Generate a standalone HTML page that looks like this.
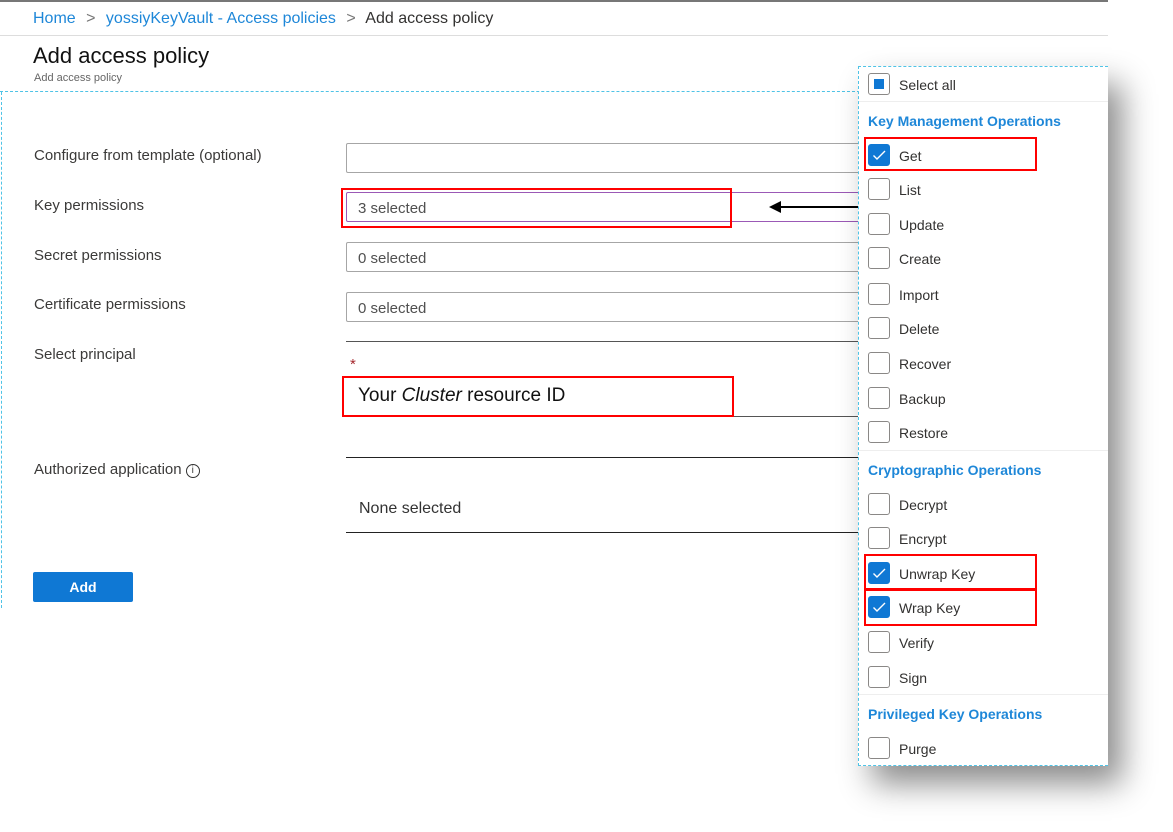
<!DOCTYPE html>
<html><head><meta charset="utf-8"><style>
*{margin:0;padding:0;box-sizing:border-box}
body{width:1173px;height:832px;position:relative;background:#fff;font-family:"Segoe UI","Liberation Sans",sans-serif;overflow:hidden;color:#323130}
.a{position:absolute;white-space:nowrap}
.lbl{font-size:15px;color:#3b3a39}
.inp{position:absolute;left:346px;width:520px;height:30px;border:1px solid #a6a6a6;border-radius:2px;font-size:15px;color:#505050;padding:7px 11px 3px}
.cb{position:absolute;left:868px;width:22px;height:22px;border:1px solid #8a8886;border-radius:3px;background:#fff}
.cb.on{background:#0f78d4;border-color:#0f78d4}
.it{position:absolute;left:899px;font-size:14px;color:#323130}
.hd{position:absolute;left:868px;font-size:14px;color:#1e87d8;font-weight:bold}
.red{position:absolute;border:2px solid #f00}
.sep{position:absolute;left:859px;width:249px;height:1px;background:#eee}
</style></head><body>
<div class="a" style="left:0;top:0;width:1108px;height:2px;background:#777"></div>
<div class="a" style="left:33px;top:10px;font-size:16px;color:#1e87d8">Home <span style="color:#777;margin:0 6px">&gt;</span> yossiyKeyVault - Access policies <span style="color:#777;margin:0 6px">&gt;</span> <span style="color:#323130">Add access policy</span></div>
<div class="a" style="left:0;top:35px;width:1108px;height:1px;background:#ddd"></div>
<div class="a" style="left:33px;top:43px;font-size:22px;color:#111">Add access policy</div>
<div class="a" style="left:34px;top:72px;font-size:11px;color:#666">Add access policy</div>
<div class="a" style="left:0;top:91px;width:860px;border-top:1px dashed #4fc3e6"></div>
<div class="a" style="left:1px;top:92px;width:1px;height:516px;border-left:1px dashed #4fc3e6"></div>

<div class="a lbl" style="left:34px;top:147px">Configure from template (optional)</div>
<div class="a lbl" style="left:34px;top:197px">Key permissions</div>
<div class="a lbl" style="left:34px;top:247px">Secret permissions</div>
<div class="a lbl" style="left:34px;top:296px">Certificate permissions</div>
<div class="a lbl" style="left:34px;top:346px">Select principal</div>
<div class="a lbl" style="left:34px;top:461px">Authorized application <span style="display:inline-block;width:14px;height:14px;border:1.2px solid #333;border-radius:50%;font-size:10px;line-height:11px;text-align:center;vertical-align:1px">i</span></div>

<div class="inp" style="top:143px"></div>
<div class="inp" style="top:192px;border-color:#9b59b6">3 selected</div>
<div class="inp" style="top:242px">0 selected</div>
<div class="inp" style="top:292px">0 selected</div>
<div class="a" style="left:346px;top:341px;width:514px;height:1px;background:#555"></div>
<div class="a" style="left:350px;top:356px;color:#a4262c;font-size:15px">*</div>
<div class="a" style="left:358px;top:385px;font-size:19px;color:#111">Your <i>Cluster</i> resource ID</div>
<div class="a" style="left:346px;top:416px;width:514px;height:1px;background:#555"></div>
<div class="a" style="left:346px;top:457px;width:514px;height:1px;background:#222"></div>
<div class="a" style="left:359px;top:500px;font-size:16px;color:#333">None selected</div>
<div class="a" style="left:346px;top:532px;width:514px;height:1px;background:#222"></div>
<div class="a" style="left:33px;top:572px;width:100px;height:30px;background:#0f78d4;border-radius:2px;color:#fff;font-weight:bold;font-size:14px;text-align:center;line-height:30px">Add</div>

<div class="red" style="left:341px;top:188px;width:391px;height:40px"></div>
<div class="red" style="left:342px;top:376px;width:392px;height:41px"></div>
<div class="a" style="left:780px;top:206px;width:80px;height:2px;background:#000"></div>
<div class="a" style="left:769px;top:201px;width:0;height:0;border-top:6px solid transparent;border-bottom:6px solid transparent;border-right:12px solid #000"></div>

<div class="a" style="left:858px;top:66px;width:250px;height:700px;background:#fff;border:1px dashed #4fc3e6;border-right:none;box-shadow:14px 18px 30px rgba(0,0,0,.45)"></div>
<div class="cb" style="top:73px"><div style="position:absolute;left:5px;top:5px;width:10px;height:10px;background:#0f78d4"></div></div>
<div class="it" style="top:77px">Select all</div>
<div class="sep" style="top:101px"></div>
<div class="hd" style="top:113px">Key Management Operations</div>
<div class="sep" style="top:450px"></div>
<div class="hd" style="top:462px">Cryptographic Operations</div>
<div class="sep" style="top:694px"></div>
<div class="hd" style="top:706px">Privileged Key Operations</div>

<div class="cb on" style="top:144px"><svg width="20" height="20" viewBox="0 0 20 20"><path d="M4.5 10.5l3.5 3.5 8-8" stroke="#fff" stroke-width="1.4" fill="none"/></svg></div><div class="it" style="top:148px">Get</div>
<div class="cb" style="top:178px"></div><div class="it" style="top:182px">List</div>
<div class="cb" style="top:213px"></div><div class="it" style="top:217px">Update</div>
<div class="cb" style="top:247px"></div><div class="it" style="top:251px">Create</div>
<div class="cb" style="top:283px"></div><div class="it" style="top:287px">Import</div>
<div class="cb" style="top:317px"></div><div class="it" style="top:321px">Delete</div>
<div class="cb" style="top:352px"></div><div class="it" style="top:356px">Recover</div>
<div class="cb" style="top:387px"></div><div class="it" style="top:391px">Backup</div>
<div class="cb" style="top:421px"></div><div class="it" style="top:425px">Restore</div>
<div class="cb" style="top:493px"></div><div class="it" style="top:497px">Decrypt</div>
<div class="cb" style="top:527px"></div><div class="it" style="top:531px">Encrypt</div>
<div class="cb on" style="top:562px"><svg width="20" height="20" viewBox="0 0 20 20"><path d="M4.5 10.5l3.5 3.5 8-8" stroke="#fff" stroke-width="1.4" fill="none"/></svg></div><div class="it" style="top:566px">Unwrap Key</div>
<div class="cb on" style="top:596px"><svg width="20" height="20" viewBox="0 0 20 20"><path d="M4.5 10.5l3.5 3.5 8-8" stroke="#fff" stroke-width="1.4" fill="none"/></svg></div><div class="it" style="top:600px">Wrap Key</div>
<div class="cb" style="top:631px"></div><div class="it" style="top:635px">Verify</div>
<div class="cb" style="top:666px"></div><div class="it" style="top:670px">Sign</div>
<div class="cb" style="top:737px"></div><div class="it" style="top:741px">Purge</div>

<div class="red" style="left:864px;top:137px;width:173px;height:34px"></div>
<div class="red" style="left:864px;top:554px;width:173px;height:36px"></div>
<div class="red" style="left:864px;top:589px;width:173px;height:37px"></div>
</body></html>
